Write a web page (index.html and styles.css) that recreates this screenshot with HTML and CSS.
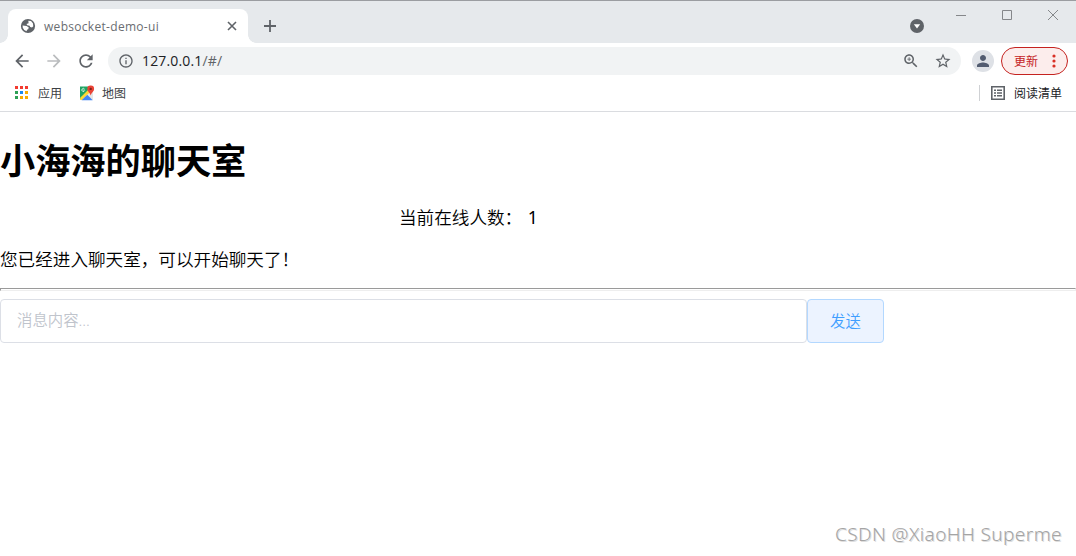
FILE: index.html
```
<!DOCTYPE html>
<html lang="zh-CN">
<head>
    <meta charset="UTF-8">
    <meta name="viewport" content="width=device-width, initial-scale=1.0">
    <title>websocket-demo-ui</title>
    <link rel="stylesheet" href="styles.css">
</head>
<body>
    <div class="browser">
        <div class="tab-strip">
            <div class="tab">
                <svg class="favicon" width="16" height="16" viewBox="0 0 16 16">
                    <circle cx="8" cy="8" r="7.1" fill="#5f6368"/>
                    <path d="M8.3 2.7 L11 3.1 L12.9 5.2 L13.3 8.2 L12 9.6 L10.2 9.1 L9.6 7.7 L7.2 7.3 L6.5 6.1 L8.6 5.2 Z M2.6 7.6 L6.6 8 L8.8 9.6 L8.2 11.2 L7 11.7 L6.6 13.3 L4.2 12 L2.8 9.8 Z" fill="#fff"/>
                </svg>
                <span class="tab-title">websocket-demo-ui</span>
                <svg class="tab-close" width="10" height="10" viewBox="0 0 10 10"><path d="M1 1l8 8M9 1l-8 8" stroke="#5f6368" stroke-width="1.6"/></svg>
            </div>
            <svg class="new-tab" width="12" height="12" viewBox="0 0 12 12"><path d="M6 0v12M0 6h12" stroke="#5f6368" stroke-width="1.8"/></svg>
            <svg class="tab-search" width="14" height="14" viewBox="0 0 14 14"><circle cx="7" cy="7" r="7" fill="#5f6368"/><path d="M3.8 5.2h6.4L7 9.4z" fill="#fff"/></svg>
            <div class="window-controls">
                <svg width="10" height="10" viewBox="0 0 10 10"><path d="M0 5.5h10"/></svg>
                <svg width="10" height="10" viewBox="0 0 10 10"><path d="M.5.5h9v9h-9z"/></svg>
                <svg width="10" height="10" viewBox="0 0 10 10"><path d="M0 0l10 10M10 0L0 10"/></svg>
            </div>
        </div>

        <div class="toolbar">
            <svg class="nav-icon" width="20" height="20" viewBox="0 0 24 24"><path d="M20 11H7.83l5.59-5.59L12 4l-8 8 8 8 1.41-1.41L7.83 13H20v-2z"/></svg>
            <svg class="nav-icon disabled" width="20" height="20" viewBox="0 0 24 24"><path d="M12 4l-1.41 1.41L16.17 11H4v2h12.17l-5.58 5.59L12 20l8-8z"/></svg>
            <svg class="nav-icon" width="20" height="20" viewBox="0 0 24 24"><path d="M17.65 6.35C16.2 4.9 14.21 4 12 4c-4.42 0-7.99 3.58-7.99 8s3.57 8 7.99 8c3.73 0 6.84-2.55 7.73-6h-2.08c-.82 2.33-3.04 4-5.65 4-3.31 0-6-2.69-6-6s2.69-6 6-6c1.66 0 3.14.69 4.22 1.78L13 11h7V4l-2.35 2.35z"/></svg>
            <div class="address-bar">
                <svg width="16" height="16" viewBox="0 0 24 24"><path d="M11 17h2v-6h-2v6zm1-15C6.48 2 2 6.48 2 12s4.48 10 10 10 10-4.48 10-10S17.52 2 12 2zm0 18c-4.41 0-8-3.59-8-8s3.59-8 8-8 8 3.59 8 8-3.59 8-8 8zM11 9h2V7h-2v2z"/></svg>
                <span class="url">127.0.0.1<span class="url-path">/#/</span></span>
                <svg class="zoom-icon" width="18" height="18" viewBox="0 0 24 24"><path d="M15.5 14h-.79l-.28-.27C15.41 12.59 16 11.11 16 9.5 16 5.91 13.09 3 9.5 3S3 5.91 3 9.5 5.91 16 9.5 16c1.61 0 3.09-.59 4.23-1.57l.27.28v.79l5 4.99L20.49 19l-4.99-5zm-6 0C7.01 14 5 11.99 5 9.5S7.01 5 9.5 5 14 7.01 14 9.5 11.99 14 9.5 14zm.6-7H8.9v1.9H7v1.2h1.9V12h1.2v-1.9H12V8.9h-1.9z"/></svg>
                <svg width="18" height="18" viewBox="0 0 24 24"><path d="M22 9.24l-7.19-.62L12 2 9.19 8.63 2 9.24l5.46 4.73L5.82 21 12 17.27 18.18 21l-1.63-7.03L22 9.24zM12 15.4l-3.76 2.27 1-4.28-3.32-2.88 4.38-.38L12 6.1l1.71 4.04 4.38.38-3.32 2.88 1 4.28L12 15.4z"/></svg>
            </div>
            <div class="avatar">
                <svg width="18" height="18" viewBox="0 0 24 24"><path d="M12 12c2.21 0 4-1.79 4-4s-1.79-4-4-4-4 1.79-4 4 1.79 4 4 4zm0 2c-2.67 0-8 1.34-8 4v2h16v-2c0-2.66-5.33-4-8-4z"/></svg>
            </div>
            <div class="update">
                <span>更新</span>
                <svg width="4" height="14" viewBox="0 0 4 14"><circle cx="2" cy="2" r="1.6"/><circle cx="2" cy="7" r="1.6"/><circle cx="2" cy="12" r="1.6"/></svg>
            </div>
        </div>

        <div class="bookmarks">
            <svg class="apps-icon" width="13" height="13" viewBox="0 0 13 13">
                <path d="M0 0h3v3H0zM5 0h3v3H5zM10 0h3v3h-3z" fill="#f23b30"/>
                <path d="M0 5h3v3H0zM0 10h3v3H0z" fill="#2da055"/>
                <path d="M5 5h3v3H5z" fill="#1a88f0"/>
                <path d="M10 5h3v3h-3zM5 10h3v3H5zM10 10h3v3h-3z" fill="#f9ab00"/>
            </svg>
            <span class="bookmark-name">应用</span>
            <svg class="maps-icon" width="16" height="16" viewBox="0 0 16 16">
                <path d="M1 1.5h12v12.8H1z" fill="#1fa463"/>
                <path d="M8.8 8.2L14 4v11H2z" fill="#e6e6e6"/>
                <path d="M1.2 12.8L9.8 4.2l2 2L3 15H1.2z" fill="#fdd835"/>
                <path d="M2.6 15.2l5.7-5.4 5.4 5.4z" fill="#4285f4"/>
                <path d="M5.6 5.1H4.2M5.5 4a1.5 1.5 0 1 0 .2 1.6" fill="none" stroke="#fff" stroke-width=".8"/>
                <path d="M11.7.5a3.3 3.3 0 0 0-3.4 3.4c0 2.5 2.6 3.5 3.4 6.6.8-3.1 3.4-4.1 3.4-6.6A3.3 3.3 0 0 0 11.7.5z" fill="#ea4335"/>
                <circle cx="11.7" cy="3.9" r="1.2" fill="#7b231c"/>
            </svg>
            <span class="bookmark-name">地图</span>
            <div class="reading-list">
                <svg width="14" height="14" viewBox="0 0 14 14">
                    <path d="M.8.8h12.4v12.4H.8z" fill="none" stroke="#5f6368" stroke-width="1.6"/>
                    <path d="M3 3.5h2v1.4H3zM6 3.5h5v1.4H6zM3 6.3h2v1.4H3zM6 6.3h5v1.4H6zM3 9.1h2v1.4H3zM6 9.1h5v1.4H6z" fill="#5f6368"/>
                </svg>
                <span>阅读清单</span>
            </div>
        </div>
    </div>

    <main class="chat-room">
        <h1>小海海的聊天室</h1>
        <div class="online">当前在线人数： <span class="count">1</span></div>
        <p class="notice">您已经进入聊天室，可以开始聊天了！</p>
        <hr>
        <div class="message-form">
            <input class="message-input" type="text" placeholder="消息内容...">
            <button class="send-button">发送</button>
        </div>
    </main>

    <div class="watermark">CSDN @XiaoHH Superme</div>
</body>
</html>
```
FILE: styles.css
```
* {
    box-sizing: border-box;
}

body {
    margin: 0;
    height: 556px;
    overflow: hidden;
    position: relative;
    background: #fff;
    color: #000;
    font-family: "Noto Sans", "Noto Sans CJK SC", sans-serif;
}

svg {
    display: block;
    flex: none;
}

.browser {
    height: 112px;
    border-top: 1px solid #9b9da1;
    border-bottom: 1px solid #dadce0;
    font-size: 12px;
}

.tab-strip {
    display: flex;
    height: 42px;
    padding: 8px 0 0 8px;
    background: #e6e9ec;
}

.tab {
    position: relative;
    display: flex;
    align-items: center;
    width: 240px;
    padding: 0 11px 0 12px;
    border-radius: 8px 8px 0 0;
    background: #fff;
}

/* curved feet of the active tab */
.tab::before,
.tab::after {
    content: "";
    position: absolute;
    bottom: 0;
    width: 8px;
    height: 8px;
}

.tab::before {
    left: -8px;
    background: radial-gradient(circle at 0 0, transparent 7.5px, #fff 8px);
}

.tab::after {
    right: -8px;
    background: radial-gradient(circle at 100% 0, transparent 7.5px, #fff 8px);
}

.tab-title {
    margin-left: 8px;
    color: #6a6d71;
    font-family: "Open Sans", sans-serif;
    font-size: 12px;
    letter-spacing: 0.3px;
}

.tab-close {
    margin-left: auto;
}

.new-tab {
    margin: 11px 0 0 16px;
}

.tab-search {
    margin: 10px 0 0 auto;
}

.window-controls {
    display: flex;
    gap: 36px;
    margin: 1px 18px 0 32px;
}

.window-controls path {
    fill: none;
    stroke: #85878a;
}

.toolbar {
    display: flex;
    align-items: center;
    height: 36px;
    padding: 0 8px 0 12px;
}

.nav-icon {
    margin-right: 12px;
    fill: #5f6368;
}

.nav-icon.disabled {
    fill: #babcbe;
}

.address-bar {
    display: flex;
    flex: 1;
    align-items: center;
    height: 28px;
    padding: 0 9px 0 10px;
    border-radius: 14px;
    background: #f1f3f4;
    fill: #5f6368;
}

.url {
    margin-left: 8px;
    padding-bottom: 2px;
    color: #202124;
    font-family: "Open Sans", sans-serif;
    font-size: 14px;
    letter-spacing: 0.15px;
}

.url-path {
    color: #5f6368;
}

.zoom-icon {
    margin: 0 14px 0 auto;
}

.avatar {
    display: flex;
    align-items: center;
    justify-content: center;
    width: 22px;
    height: 22px;
    margin: 0 7px 0 11px;
    border-radius: 50%;
    background: #dee1e6;
    fill: #525c70;
}

.update {
    display: flex;
    align-items: center;
    justify-content: space-between;
    width: 67px;
    height: 28px;
    padding: 0 11px 0 12px;
    border: 1px solid #c5221f;
    border-radius: 14px;
    background: #fcedec;
    color: #c5221f;
    fill: #d93025;
}

.bookmarks {
    display: flex;
    align-items: center;
    height: 28px;
    padding: 0 14px 0 15px;
    color: #3c4043;
}

.apps-icon {
    margin-bottom: 1px;
}

.bookmark-name {
    margin-left: 10px;
}

.maps-icon {
    margin-left: 17px;
}

.maps-icon + .bookmark-name {
    margin-left: 7px;
}

.reading-list {
    display: flex;
    align-items: center;
    gap: 9px;
    height: 16px;
    margin-left: auto;
    padding-left: 11px;
    border-left: 1px solid #cfd1d4;
    color: #202124;
}

.chat-room {
    padding-top: 21px;
    font-size: 17.6px;
}

.chat-room h1 {
    margin: 0;
    font-size: 35.2px;
    line-height: 54px;
}

.online {
    margin-top: 18px;
    padding-left: 399px;
    font-weight: 350;
    line-height: 24px;
}

.count {
    margin-left: 1px;
    font-weight: 400;
}

.notice {
    margin: 18px 0 17px;
    font-weight: 350;
    line-height: 24px;
}

.chat-room hr {
    height: 3px;
    margin: 0;
    border: 1px solid;
    border-color: #9a9a9a #eee #eee #9a9a9a;
}

.message-form {
    display: flex;
    margin-top: 8px;
}

.message-input,
.send-button {
    height: 44px;
    border: 1px solid #dcdfe6;
    border-radius: 4px;
    font-family: inherit;
    font-size: 15.4px;
    font-weight: 350;
}

.message-input {
    width: 807px;
    padding: 0 16px 2px;
}

.message-input::placeholder {
    color: #c0c4cc;
}

.send-button {
    width: 77px;
    padding: 0 0 2px;
    border-color: #b3d8ff;
    background: #ecf3ff;
    color: #409eff;
}

.watermark {
    position: absolute;
    right: 14px;
    bottom: 8px;
    color: #a4a4a4;
    font-size: 19px;
    font-weight: 300;
    letter-spacing: 0.42px;
    line-height: 28px;
    text-shadow: 1px 1px 0 #ddd;
}
```
